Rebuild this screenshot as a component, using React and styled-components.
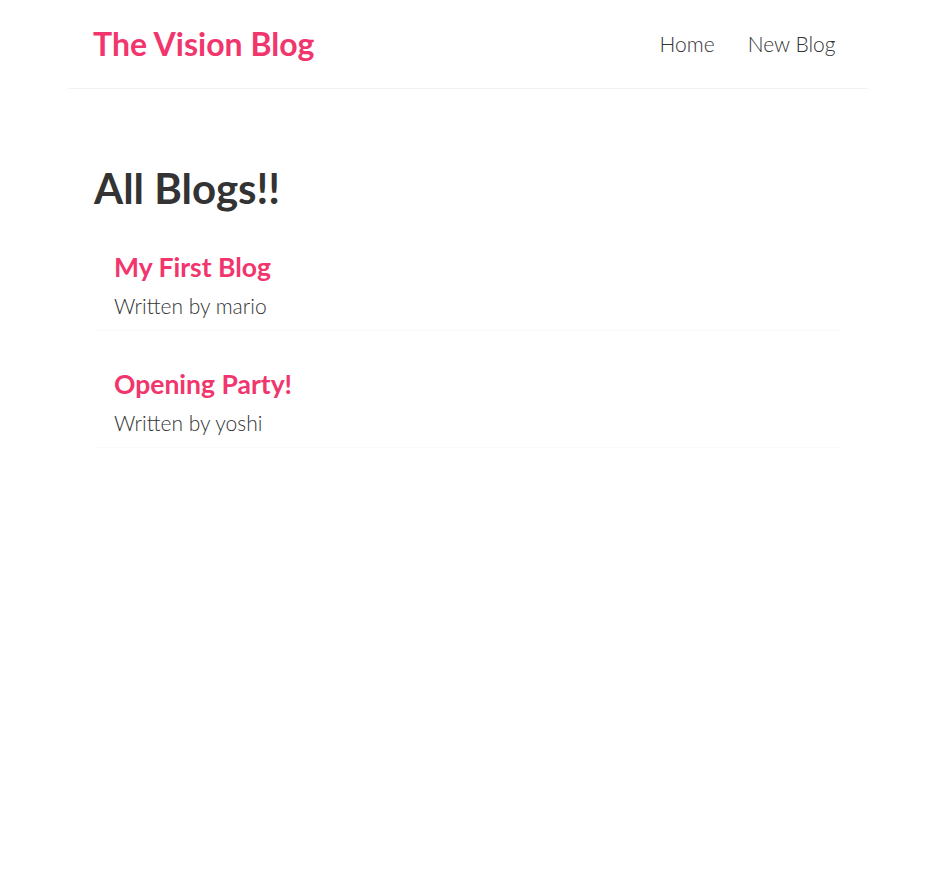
import styled, { createGlobalStyle } from "styled-components";

const GlobalStyle = createGlobalStyle`
  * {
    margin: 0;
    box-sizing: border-box;
  }
  body {
    margin: 0;
    background: #fff;
    color: #333;
    font-family: "Lato", "Noto Sans", sans-serif;
  }
`;

const Page = styled.div`
  padding-left: 4px;
`;

const Navbar = styled.nav`
  max-width: 800px;
  margin: 0 auto;
  padding: 25px;
  display: flex;
  align-items: center;
  border-bottom: 1px solid #f2f2f2;
`;

const Brand = styled.h1`
  color: #f1356d;
  font-size: 32px;
  font-weight: 700;
  line-height: 38px;
`;

const Links = styled.div`
  margin-left: auto;
  display: flex;
  gap: 18px;
`;

const NavLink = styled.a`
  color: #333;
  text-decoration: none;
  font-size: 21px;
  font-weight: 300;
  line-height: 26px;
  padding: 6px 7.5px;
`;

const Content = styled.main`
  max-width: 800px;
  margin: 50px auto;
  padding: 25px 25px 25px 26px;
`;

const Heading = styled.h2`
  font-size: 42px;
  font-weight: 700;
  line-height: 48px;
  color: #333;
`;

const BlogList = styled.div`
  display: flex;
  flex-direction: column;
  gap: 25px;
  margin-top: 27px;
`;

const Preview = styled.div`
  padding: 12.5px 20px;
  border-bottom: 1px solid #fafafa;
`;

const PreviewTitle = styled.h2`
  font-size: 26.5px;
  font-weight: 700;
  line-height: 31px;
  color: #f1356d;
  margin-bottom: 10px;
`;

const Author = styled.p`
  font-size: 21px;
  font-weight: 300;
  line-height: 25px;
  color: #333;
`;

const blogs = [
  { id: 1, title: "My First Blog", author: "mario" },
  { id: 2, title: "Opening Party!", author: "yoshi" },
];

const App = () => {
  return (
    <Page>
      <GlobalStyle />
      <Navbar>
        <Brand>The Vision Blog</Brand>
        <Links>
          <NavLink href="#">Home</NavLink>
          <NavLink href="#">New Blog</NavLink>
        </Links>
      </Navbar>
      <Content>
        <Heading>All Blogs!!</Heading>
        <BlogList>
          {blogs.map((blog) => (
            <Preview key={blog.id}>
              <PreviewTitle>{blog.title}</PreviewTitle>
              <Author>Written by {blog.author}</Author>
            </Preview>
          ))}
        </BlogList>
      </Content>
    </Page>
  );
};

export default App;
